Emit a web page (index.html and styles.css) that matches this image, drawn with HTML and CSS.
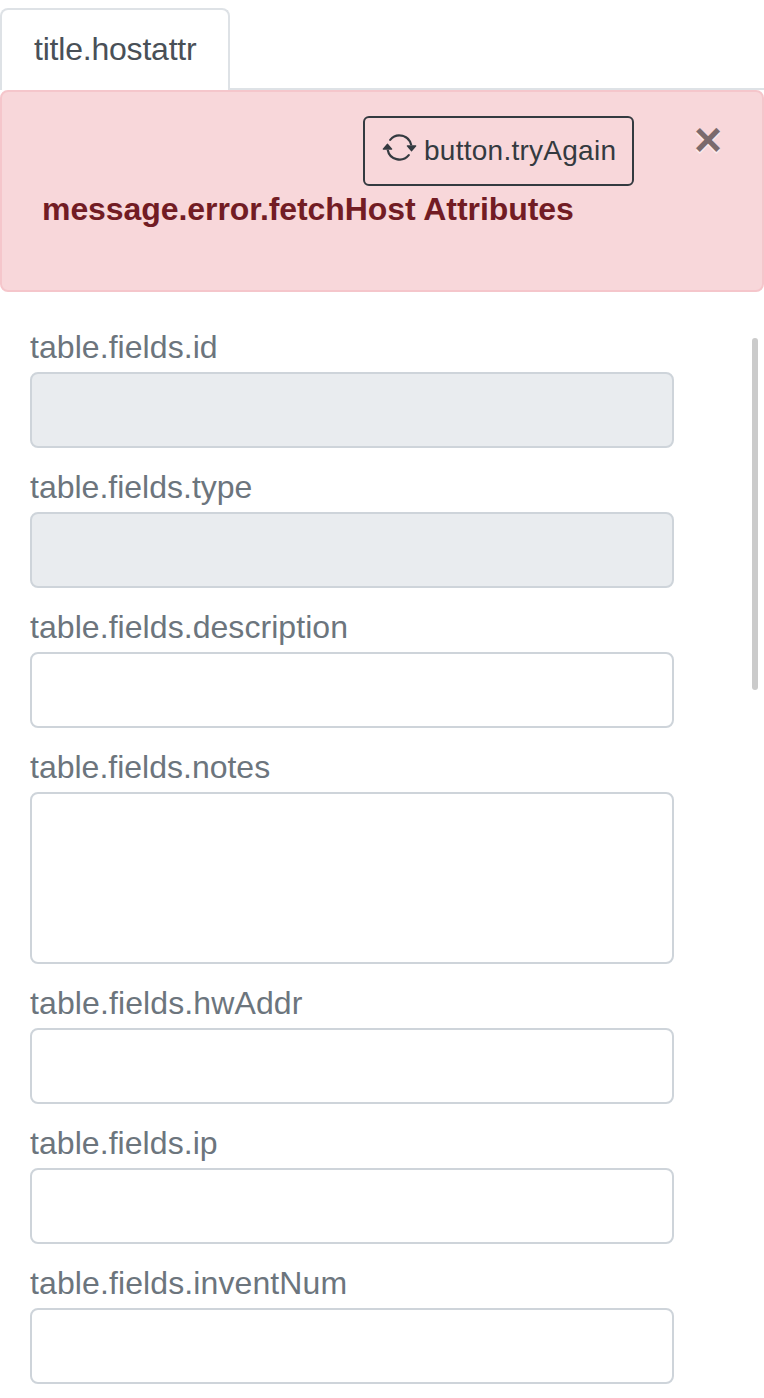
FILE: index.html
```html
<!DOCTYPE html>
<html lang="en">
<head>
<meta charset="utf-8">
<title>title.hostattr</title>
<link rel="stylesheet" href="styles.css">
</head>
<body>
<nav class="tabs"><a class="tab">title.hostattr</a><span class="tabs-line"></span></nav>
<section class="alert">
  <div class="alert-actions">
    <button class="retry" type="button">
      <svg class="retry-icon" viewBox="0 0 16 16" fill="currentColor"><path d="M11.534 7h3.932a.25.25 0 0 1 .192.41l-1.966 2.36a.25.25 0 0 1-.384 0l-1.966-2.36a.25.25 0 0 1 .192-.41zm-11 2h3.932a.25.25 0 0 0 .192-.41L2.692 6.23a.25.25 0 0 0-.384 0L.342 8.59A.25.25 0 0 0 .534 9z"/><path d="M8 3c-1.552 0-2.94.707-3.857 1.818a.5.5 0 1 1-.771-.636A6.002 6.002 0 0 1 13.917 7H12.9A5.002 5.002 0 0 0 8 3zM3.1 9a5.002 5.002 0 0 0 8.757 2.182.5.5 0 1 1 .771.636A6.002 6.002 0 0 1 2.083 9H3.1z"/></svg>
      <span>button.tryAgain</span>
    </button>
    <button class="close" type="button">×</button>
  </div>
  <strong class="alert-text">message.error.fetchHost Attributes</strong>
</section>
<div class="panel">
  <form class="fields">
    <label class="field"><span class="label">table.fields.id</span><input class="control" disabled></label>
    <label class="field"><span class="label label-flush">table.fields.type</span><input class="control" disabled></label>
    <label class="field"><span class="label">table.fields.description</span><input class="control"></label>
    <label class="field"><span class="label label-flush">table.fields.notes</span><textarea class="control control-tall"></textarea></label>
    <label class="field"><span class="label label-wide">table.fields.hwAddr</span><input class="control"></label>
    <label class="field"><span class="label">table.fields.ip</span><input class="control"></label>
    <label class="field"><span class="label label-wide">table.fields.inventNum</span><input class="control"></label>
  </form>
  <div class="scroll-thumb"></div>
</div>
</body>
</html>
```
FILE: styles.css
```css
* { box-sizing: border-box; }
html, body { height: 1398px; overflow: hidden; }
body {
  margin: 0;
  background: #fff;
  font: 32px/46px "Liberation Sans", Arial, sans-serif;
}
.tabs { display: flex; height: 90px; padding-top: 8px; }
.tab {
  width: 230px;
  padding: 16px 32px;
  border: 2px solid #dee2e6;
  border-bottom: 0;
  border-radius: 8px 8px 0 0;
  color: #495057;
  letter-spacing: -.21px;
}
.tabs-line { flex: 1; border-bottom: 2px solid #dee2e6; }
.alert {
  height: 202px;
  padding: 24px 40px 0;
  border: 2px solid #f5c6cb;
  border-radius: 8px;
  background: #f8d7da;
  color: #721c24;
}
.alert-actions { display: flex; justify-content: flex-end; height: 70px; }
.retry {
  display: flex;
  gap: 7px;
  width: 271px;
  height: 70px;
  margin: 0 60px 0 0;
  padding: 12px 16px 12px 17px;
  border: 2px solid #343a40;
  border-radius: 6px;
  background: transparent;
  color: #343a40;
  font: 28px/42px "Liberation Sans", Arial, sans-serif;
  letter-spacing: .26px;
  white-space: nowrap;
}
.retry-icon { flex: none; width: 35px; height: 35px; }
.close {
  width: 28px;
  height: 48px;
  margin: 0;
  padding: 0;
  border: 0;
  background: transparent;
  color: #000;
  font: bold 48px/48px "Liberation Sans", Arial, sans-serif;
  text-shadow: 0 2px 0 #fff;
  opacity: .5;
}
.alert-text { display: block; letter-spacing: -.07px; }
.panel { display: flex; justify-content: space-between; padding: 32px 6px 0 30px; }
.fields { display: flex; flex-direction: column; gap: 16px; width: 644px; }
.field { display: flex; flex-direction: column; color: #6c757d; }
.label { height: 48px; letter-spacing: .06px; }
.label-flush { letter-spacing: 0; }
.label-wide { letter-spacing: .11px; }
.control {
  width: 100%;
  height: 76px;
  margin: 0;
  padding: 12px 24px;
  border: 2px solid #ced4da;
  border-radius: 8px;
  background: #fff;
  font: inherit;
}
.control:disabled { background: #e9ecef; }
.control-tall { height: 172px; resize: none; }
.scroll-thumb { width: 6px; height: 352px; margin-top: 14px; border-radius: 3px; background: #cbcbcb; }
```
